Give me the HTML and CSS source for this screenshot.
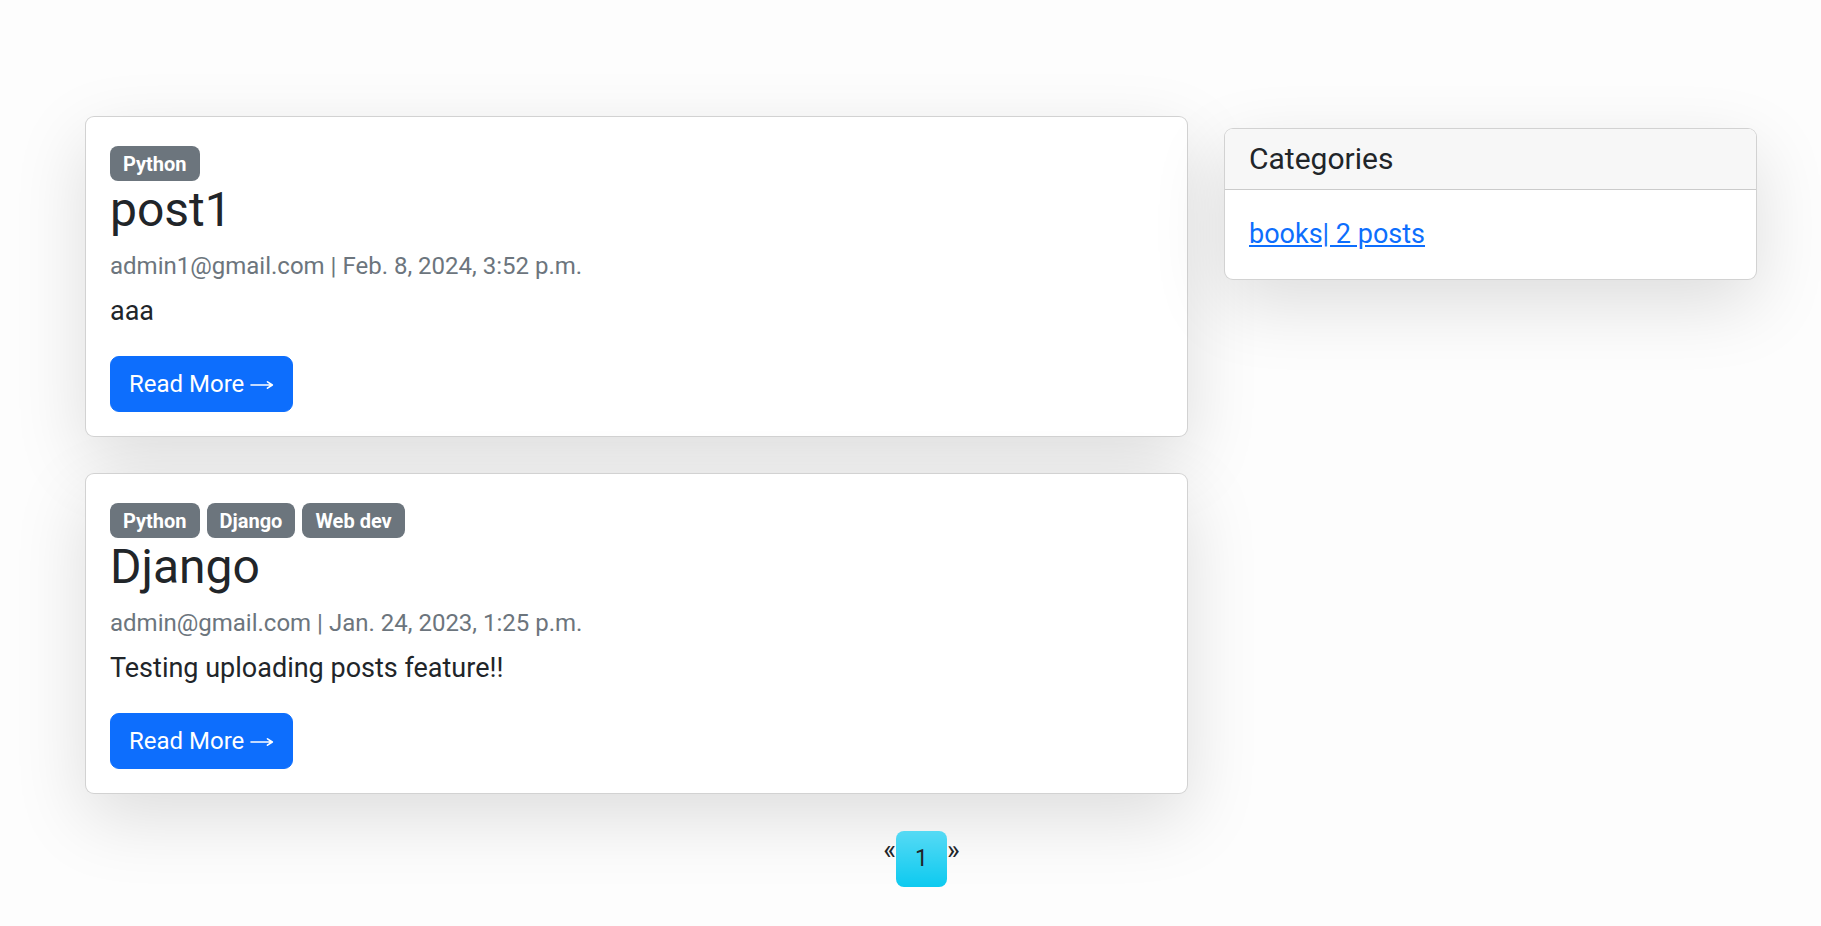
FILE: index.html
```html
<!DOCTYPE html>
<html lang="en">
<head>
<meta charset="utf-8">
<title>Blog</title>
<link rel="stylesheet" href="styles.css">
</head>
<body>
<div class="page">
  <div class="layout">
    <main class="posts">
      <article class="card post">
        <div class="tags"><span class="badge">Python</span></div>
        <h2 class="post-title">post1</h2>
        <p class="meta">admin1@gmail.com | Feb. 8, 2024, 3:52 p.m.</p>
        <p class="excerpt">aaa</p>
        <a class="btn" href="#">Read More <svg class="arrow" width="24" height="10" viewBox="0 0 24 10" aria-hidden="true"><path d="M1 5 H22 M17.5 1.8 L22.3 5 L17.5 8.2" fill="none" stroke="#fff" stroke-width="1.6" stroke-linecap="round" stroke-linejoin="round"/></svg></a>
      </article>
      <article class="card post">
        <div class="tags"><span class="badge">Python</span><span class="badge">Django</span><span class="badge">Web dev</span></div>
        <h2 class="post-title">Django</h2>
        <p class="meta">admin@gmail.com | Jan. 24, 2023, 1:25 p.m.</p>
        <p class="excerpt">Testing uploading posts feature!!</p>
        <a class="btn" href="#">Read More <svg class="arrow" width="24" height="10" viewBox="0 0 24 10" aria-hidden="true"><path d="M1 5 H22 M17.5 1.8 L22.3 5 L17.5 8.2" fill="none" stroke="#fff" stroke-width="1.6" stroke-linecap="round" stroke-linejoin="round"/></svg></a>
      </article>
    </main>
    <aside class="sidebar">
      <div class="card side-card">
        <h5 class="card-header">Categories</h5>
        <div class="side-body">
          <a class="cat-link" href="#">books| 2 posts</a>
        </div>
      </div>
    </aside>
  </div>
  <nav class="pagination">
    <a class="pg-arrow" href="#">&laquo;</a>
    <span class="pg-current">1</span>
    <a class="pg-arrow" href="#">&raquo;</a>
  </nav>
</div>
</body>
</html>
```

FILE: styles.css
```css
html, body {
  margin: 0;
  padding: 0;
  background: #fdfdfd;
}
body {
  font-family: Roboto, "Liberation Sans", sans-serif;
  color: #212529;
  font-size: 24px;
  line-height: 1.5;
}
.page {
  padding: 116px 0 40px 0;
}
.layout {
  display: grid;
  grid-template-columns: 1103px 533px;
  column-gap: 36px;
  padding-left: 85px;
  align-items: start;
}
.posts {
  display: flex;
  flex-direction: column;
  gap: 36px;
}
.card {
  background: #fff;
  border: 1px solid rgba(0, 0, 0, 0.175);
  border-radius: 9px;
  box-shadow: 0 24px 72px rgba(0, 0, 0, 0.13);
}
.post {
  padding: 24px;
  display: flex;
  flex-direction: column;
  align-items: flex-start;
}
.tags {
  display: flex;
  gap: 7px;
  margin-top: 5px;
  margin-bottom: 0;
}
.badge {
  display: block;
  background: #6c757d;
  color: #fff;
  font-weight: 700;
  font-size: 20px;
  line-height: 20px;
  padding: 7.5px 13px;
  border-radius: 8px;
}
.post-title {
  font-size: 48px;
  font-weight: 400;
  line-height: 1.2;
  margin: 0 0 9px 0;
}
.meta {
  margin: 0 0 7px 0;
  color: #6c757d;
  font-size: 24px;
  line-height: 36px;
}
.excerpt {
  margin: 0 0 25px 0;
  font-size: 27px;
  line-height: 40.5px;
}
.btn {
  display: inline-flex;
  align-items: center;
  gap: 6px;
  background: #0d6efd;
  border: 1px solid #0d6efd;
  color: #fff;
  text-decoration: none;
  font-size: 24px;
  line-height: 36px;
  padding: 9px 18px;
  border-radius: 9px;
}
.arrow {
  display: block;
  margin-top: 2px;
}
.sidebar {
  margin-top: 12px;
}
.side-card {
  overflow: hidden;
}
.card-header {
  margin: 0;
  background: #f7f7f7;
  border-bottom: 1px solid rgba(0, 0, 0, 0.175);
  font-size: 30px;
  font-weight: 400;
  line-height: 36px;
  padding: 12px 24px;
}
.side-body {
  padding: 24px;
  font-size: 27px;
  line-height: 40.5px;
}
.cat-link {
  color: #0d6efd;
  text-decoration: underline;
}
.pagination {
  display: flex;
  justify-content: center;
  align-items: flex-start;
  padding-left: 22px;
  margin-top: 37px;
}
.pg-arrow {
  color: #212529;
  text-decoration: none;
  font-size: 27px;
  line-height: 36px;
  margin-top: 1px;
}
.pg-current {
  display: block;
  background: #0dcaf0 linear-gradient(180deg, rgba(255,255,255,0.3), rgba(255,255,255,0));
  color: #212529;
  font-size: 23px;
  line-height: 36px;
  padding: 10px 19px;
  border-radius: 8px;
}
```
